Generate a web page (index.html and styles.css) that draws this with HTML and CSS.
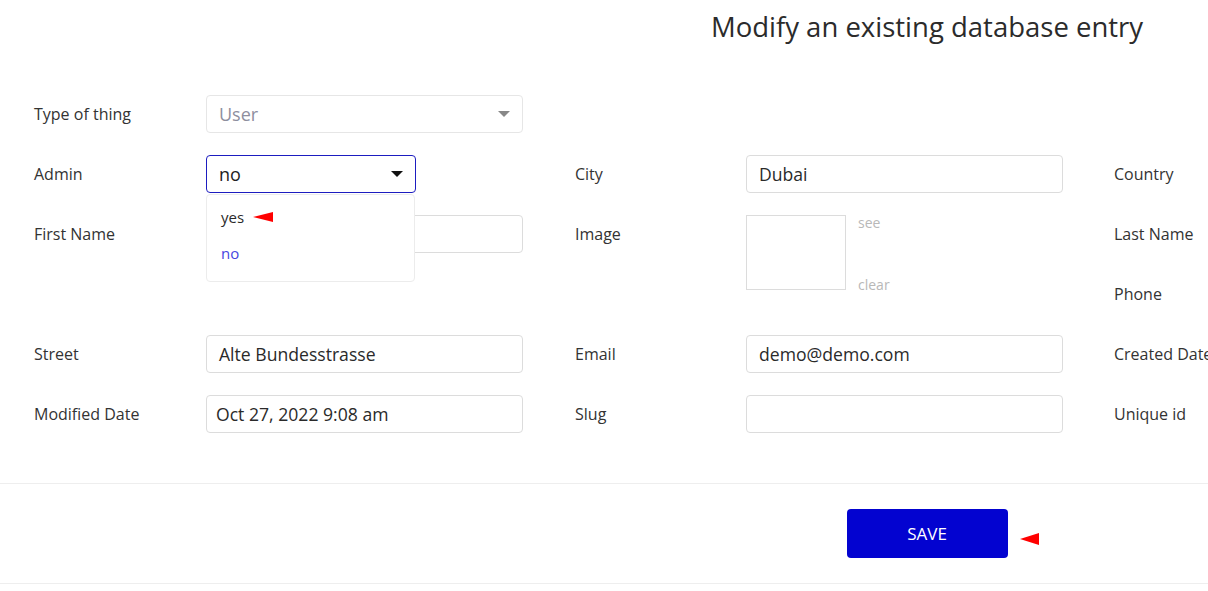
FILE: index.html
```html
<!DOCTYPE html>
<html lang="en">
<head>
<meta charset="utf-8">
<title>Modify an existing database entry</title>
<link rel="stylesheet" href="styles.css">
</head>
<body>
<div class="page">
  <h1 class="title">Modify an existing database entry</h1>

  <div class="type-row">
    <div class="field">
      <span class="label">Type of thing</span>
      <div class="select select-muted">
        <span class="select-text">User</span>
        <span class="caret caret-gray"></span>
      </div>
    </div>
  </div>

  <div class="form">
    <div class="field admin-field">
      <span class="label">Admin</span>
      <div class="select-wrap">
        <div class="select select-active">
          <span class="select-text">no</span>
          <span class="caret"></span>
        </div>
        <div class="menu">
          <div class="option">yes<span class="pointer pointer-small"></span></div>
          <div class="option option-selected">no</div>
        </div>
      </div>
    </div>
    <div class="field col2">
      <span class="label">City</span>
      <div class="input">Dubai</div>
    </div>
    <div class="field">
      <span class="label">Country</span>
      <div class="input"></div>
    </div>

    <div class="field">
      <span class="label">First Name</span>
      <div class="input"></div>
    </div>
    <div class="field image-field col2">
      <span class="label">Image</span>
      <div class="image-box"></div>
      <div class="image-actions">
        <span>see</span>
        <span>clear</span>
      </div>
    </div>
    <div class="field">
      <span class="label">Last Name</span>
      <div class="input"></div>
    </div>

    <div class="field empty-field"></div>
    <div class="field">
      <span class="label">Phone</span>
      <div class="input"></div>
    </div>

    <div class="field">
      <span class="label">Street</span>
      <div class="input">Alte Bundesstrasse</div>
    </div>
    <div class="field col2">
      <span class="label">Email</span>
      <div class="input">demo@demo.com</div>
    </div>
    <div class="field">
      <span class="label">Created Date</span>
      <div class="input"></div>
    </div>

    <div class="field">
      <span class="label">Modified Date</span>
      <div class="input input-date">Oct 27, 2022 9:08 am</div>
    </div>
    <div class="field col2">
      <span class="label">Slug</span>
      <div class="input"></div>
    </div>
    <div class="field">
      <span class="label">Unique id</span>
      <div class="input"></div>
    </div>
  </div>

  <div class="footer">
    <div class="save-wrap">
      <button class="save" type="button">SAVE</button>
      <span class="pointer pointer-save"></span>
    </div>
  </div>
  <div class="below"></div>
</div>
</body>
</html>
```

FILE: styles.css
```css
html, body {
  margin: 0;
  padding: 0;
  background: #ffffff;
  overflow: hidden;
}

body {
  font-family: "Open Sans", "Noto Sans", "Liberation Sans", sans-serif;
  color: #333333;
}

.page {
  width: 1854px;
  position: relative;
}

.title {
  margin: 0;
  padding-top: 7px;
  height: 95px;
  box-sizing: border-box;
  text-align: center;
  font-size: 27.5px;
  font-weight: 400;
  line-height: 40px;
  color: #2b2b2b;
}

.type-row {
  padding-left: 34px;
  margin-bottom: 22px;
}

.form {
  padding-left: 34px;
  display: grid;
  grid-template-columns: 541px 539px 540px;
  grid-auto-rows: 38px;
  row-gap: 22px;
}

.field {
  display: flex;
  align-items: center;
  height: 38px;
}

.label {
  width: 172px;
  flex: none;
  font-size: 16px;
  line-height: 38px;
  color: #333333;
}

.col2 .label {
  width: 171px;
}

.input {
  width: 317px;
  height: 38px;
  box-sizing: border-box;
  border: 1px solid #dcdcdc;
  border-radius: 4px;
  padding: 0 12px;
  font-size: 17.6px;
  line-height: 36px;
  color: #2a2a2a;
  white-space: nowrap;
}

.input-date {
  padding-left: 9px;
}

.select-wrap {
  position: relative;
}

.select {
  position: relative;
  height: 38px;
  box-sizing: border-box;
  border-radius: 4px;
  padding: 0 12px;
  font-size: 18px;
  line-height: 36px;
}

.select-muted {
  width: 317px;
  border: 1px solid #e6e6e6;
  color: #8e8e9e;
}

.select-active {
  width: 210px;
  border: 1px solid #1d1dc0;
  color: #222222;
}

.caret {
  position: absolute;
  right: 12px;
  top: 15px;
  width: 0;
  height: 0;
  border-left: 6px solid transparent;
  border-right: 6px solid transparent;
  border-top: 6px solid #111111;
}

.caret-gray {
  right: 12px;
  border-top: 6px solid #888888;
}

.menu {
  position: absolute;
  top: 39px;
  left: 0;
  width: 209px;
  height: 88px;
  box-sizing: border-box;
  background: #ffffff;
  border: 1px solid #ececec;
  border-radius: 4px;
  padding-top: 10px;
  z-index: 5;
}

.option {
  display: flex;
  align-items: center;
  padding-left: 14px;
  height: 24px;
  margin-bottom: 12px;
  font-size: 15px;
  color: #2a2a2a;
}

.option-selected {
  color: #4646e0;
}

.pointer {
  display: inline-block;
  width: 0;
  height: 0;
  border-top: 6px solid transparent;
  border-bottom: 6px solid transparent;
  border-right: 20px solid #ff0000;
}

.pointer-small {
  margin-left: 9px;
  border-top-width: 5px;
  border-bottom-width: 5px;
}

.image-field {
  grid-row: span 2;
  height: 98px;
  align-items: flex-start;
}

.image-box {
  width: 100px;
  height: 75px;
  box-sizing: border-box;
  border: 1px solid #dcdcdc;
}

.image-actions {
  display: flex;
  flex-direction: column;
  justify-content: space-between;
  height: 78px;
  margin-left: 12px;
  font-size: 14px;
  line-height: 16px;
  color: #b8b8b8;
}

.footer {
  margin-top: 50px;
  border-top: 1px solid #eeeeee;
  border-bottom: 1px solid #eeeeee;
  height: 99px;
  display: flex;
  justify-content: center;
  align-items: center;
}

.save-wrap {
  position: relative;
}

.save {
  display: block;
  width: 161px;
  height: 49px;
  border: none;
  border-radius: 4px;
  background: #0303d0;
  color: #ffffff;
  font-family: "Open Sans", "Noto Sans", "Liberation Sans", sans-serif;
  font-size: 17px;
  font-weight: 500;
  cursor: pointer;
}

.pointer-save {
  position: absolute;
  left: 173px;
  top: 24px;
  border-top-width: 6px;
  border-bottom-width: 6px;
  border-right-width: 19px;
}

.below {
  height: 10px;
}
```
